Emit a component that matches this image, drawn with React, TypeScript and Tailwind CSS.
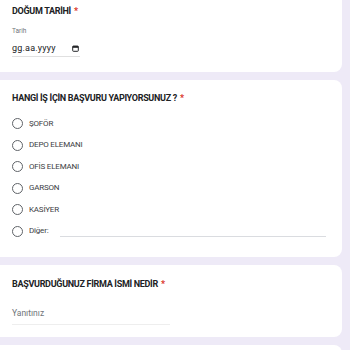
import React from 'react';

const options = ['ŞOFÖR', 'DEPO ELEMANI', 'OFİS ELEMANI', 'GARSON', 'KASİYER'];

const Required: React.FC = () => <span className="ml-[3px] text-[#d93025]">*</span>;

const Radio: React.FC = () => (
  <span className="block h-[11px] w-[11px] shrink-0 rounded-full border-[1.5px] border-[#5f6368]" />
);

const App: React.FC = () => {
  return (
    <div
      className="flex h-[350px] w-[350px] flex-col gap-2 overflow-hidden bg-[#eeeaf7] pr-2"
      style={{ fontFamily: 'Roboto, "Noto Sans", sans-serif' }}
    >
      <div className="h-[72px] shrink-0 rounded-br-lg bg-white px-3 pt-[5px]">
        <h2 className="text-[9px] font-bold leading-[12px] tracking-[-0.3px] text-[#202124]">
          DOĞUM TARİHİ
          <Required />
        </h2>
        <p className="mt-[10px] text-[6.5px] leading-[8px] text-[#70757a]">Tarih</p>
        <div className="mt-[7px] flex w-[68px] items-center justify-between border-b border-[#e0e0e0] pb-[2px]">
          <span className="text-[9px] leading-[12px] tracking-[0.2px] text-[#202124]">gg.aa.yyyy</span>
          <svg width="7" height="7" viewBox="0 0 10 10" className="mr-[1px]">
            <rect x="1" y="1.5" width="8" height="7.5" rx="1" fill="none" stroke="#202124" strokeWidth="1.4" />
            <rect x="1" y="1.5" width="8" height="2.5" fill="#202124" />
          </svg>
        </div>
      </div>

      <div className="h-[177px] shrink-0 rounded-r-lg bg-white px-3 pt-[12px]">
        <h2 className="text-[9px] font-bold leading-[12px] tracking-[-0.3px] text-[#202124]">
          HANGİ İŞ İÇİN BAŞVURU YAPIYORSUNUZ ?
          <Required />
        </h2>
        <ul className="mt-[9px] flex flex-col">
          {options.map((opt) => (
            <li key={opt} className="flex h-[21.5px] items-center">
              <Radio />
              <span className="ml-[6px] text-[8px] leading-[10px] tracking-[-0.2px] text-[#3c4043]">{opt}</span>
            </li>
          ))}
          <li className="flex h-[21.5px] items-center">
            <Radio />
            <span className="ml-[6px] text-[8px] leading-[10px] tracking-[-0.2px] text-[#3c4043]">Diğer:</span>
            <span className="ml-[12px] mt-[10px] h-px w-[266px] bg-[#dadce0]" />
          </li>
        </ul>
      </div>

      <div className="h-[72px] shrink-0 rounded-r-lg bg-white px-3 pt-[13px]">
        <h2 className="text-[9px] font-bold leading-[12px] tracking-[-0.3px] text-[#202124]">
          BAŞVURDUĞUNUZ FİRMA İSMİ NEDİR
          <Required />
        </h2>
        <div className="mt-[9px] w-[158px] border-b border-[#eeeeee] pb-[1px]">
          <span className="text-[8.5px] leading-[10px] text-[#70757a]">Yanıtınız</span>
        </div>
      </div>

      <div className="h-[40px] shrink-0 rounded-tr-lg bg-white" />
    </div>
  );
};

export default App;
